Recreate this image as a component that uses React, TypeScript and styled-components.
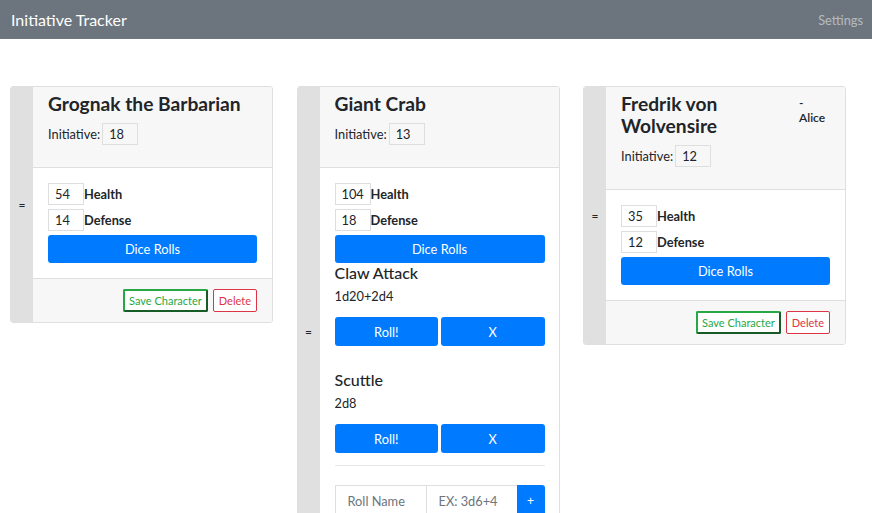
import React from 'react';
import styled, { createGlobalStyle } from 'styled-components';

const GlobalStyle = createGlobalStyle`
  html, body {
    margin: 0;
    padding: 0;
    overflow: hidden;
    background: #fff;
    font-family: Lato, "Liberation Sans", sans-serif;
    color: #212529;
  }
  * { box-sizing: border-box; }
`;

const Navbar = styled.nav`
  display: flex;
  align-items: center;
  justify-content: space-between;
  height: 39px;
  padding: 0 9px 0 11px;
  background: #6c757d;
`;

const Brand = styled.span`
  color: #fff;
  font-size: 16px;
`;

const NavLink = styled.span`
  color: rgba(255, 255, 255, 0.5);
  font-size: 12.8px;
`;

const Board = styled.main`
  display: flex;
  align-items: flex-start;
  gap: 23.5px;
  padding: 47px 10px;
`;

const Card = styled.div`
  display: flex;
  width: 263px;
  border: 1px solid #dfdfdf;
  border-radius: 3px;
  overflow: hidden;
`;

const Handle = styled.div`
  display: flex;
  align-items: center;
  justify-content: center;
  width: 22px;
  flex-shrink: 0;
  background: #e0e0e0;
  font-size: 12px;
`;

const Content = styled.div`
  flex: 1;
  display: flex;
  flex-direction: column;
`;

const Header = styled.div`
  padding: 6px 15px 22px;
  background: #f7f7f7;
  border-bottom: 1px solid #dfdfdf;
`;

const TitleRow = styled.div`
  display: flex;
  align-items: flex-start;
`;

const Title = styled.h4`
  flex: 1;
  margin: 0 0 8px;
  font-size: 19.2px;
  line-height: 22px;
  font-weight: 700;
`;

const Owner = styled.div`
  width: 31px;
  flex-shrink: 0;
  margin-top: 2px;
  font-size: 12px;
  line-height: 15px;
  font-weight: 600;
`;

const FieldRow = styled.div<{ $gap?: number }>`
  display: flex;
  align-items: center;
  gap: ${(p) => p.$gap ?? 0}px;
  font-size: 12.8px;
`;

const SmallInput = styled.input<{ $muted?: boolean }>`
  width: 36px;
  height: 22px;
  padding: 0 6px;
  border: 1px solid #dedede;
  background: ${(p) => (p.$muted ? '#f7f7f7' : '#fff')};
  font-family: inherit;
  font-size: 12.8px;
  color: #212529;
`;

const StatLabel = styled.span`
  font-weight: 700;
`;

const Body = styled.div`
  display: flex;
  flex-direction: column;
  gap: 4px;
  padding: 15px;
`;

const BlueButton = styled.button<{ $h?: number }>`
  height: ${(p) => p.$h ?? 28}px;
  width: 100%;
  border: none;
  border-radius: 3px;
  background: #007bff;
  color: #fff;
  font-family: inherit;
  font-size: 12.8px;
`;

const RollList = styled.div`
  display: flex;
  flex-direction: column;
  gap: 24px;
  margin-top: -4px;
`;

const RollItem = styled.div`
  display: flex;
  flex-direction: column;
`;

const RollName = styled.h5`
  margin: 0 0 5px;
  font-size: 16px;
  line-height: 20px;
  font-weight: 500;
`;

const RollDice = styled.div`
  margin-bottom: 13px;
  font-size: 12.8px;
  line-height: 16px;
`;

const ButtonPair = styled.div`
  display: grid;
  grid-template-columns: 1fr 1fr;
  gap: 3px;
`;

const Divider = styled.hr`
  margin: 8px 0 15px;
  border: none;
  border-top: 1px solid #e8e8e8;
`;

const InputGroup = styled.div`
  display: flex;
  height: 31px;
`;

const GroupInput = styled.input`
  width: 92px;
  height: 100%;
  padding: 0 12px;
  border: 1px solid #dedede;
  margin-right: -1px;
  font-family: inherit;
  font-size: 12.8px;
  &::placeholder { color: #6c757d; }
`;

const AddButton = styled.button`
  width: 28px;
  height: 100%;
  border: none;
  border-radius: 0 3px 3px 0;
  background: #007bff;
  color: #fff;
  font-size: 12px;
`;

const Footer = styled.div`
  display: flex;
  justify-content: flex-end;
  gap: 5px;
  padding: 10px 15px;
  background: #f7f7f7;
  border-top: 1px solid #dfdfdf;
`;

const OutlineButton = styled.button<{ $tone: 'success' | 'danger' }>`
  height: 23px;
  padding: 0 ${(p) => (p.$tone === 'success' ? 4 : 5)}px;
  border-radius: 2px;
  background: #fff;
  font-family: inherit;
  font-size: 11px;
  color: ${(p) => (p.$tone === 'success' ? '#28a745' : '#dc3545')};
  border: ${(p) => (p.$tone === 'success' ? '2px' : '1px')} solid;
  border-color: ${(p) =>
    p.$tone === 'success' ? '#28a745 #175c27 #175c27 #28a745' : '#dc3545'};
`;

interface Roll {
  name: string;
  dice: string;
}

interface Character {
  name: string;
  owner?: string;
  initiative: number;
  health: number;
  defense: number;
  rolls?: Roll[];
}

const characters: Character[] = [
  { name: 'Grognak the Barbarian', initiative: 18, health: 54, defense: 14 },
  {
    name: 'Giant Crab',
    initiative: 13,
    health: 104,
    defense: 18,
    rolls: [
      { name: 'Claw Attack', dice: '1d20+2d4' },
      { name: 'Scuttle', dice: '2d8' },
    ],
  },
  { name: 'Fredrik von Wolvensire', owner: '- Alice', initiative: 12, health: 35, defense: 12 },
];

const CharacterCard = ({ c }: { c: Character }) => (
  <Card>
    <Handle>=</Handle>
    <Content>
      <Header>
        <TitleRow>
          <Title>{c.name}</Title>
          {c.owner && <Owner>{c.owner}</Owner>}
        </TitleRow>
        <FieldRow $gap={2}>
          <span>Initiative:</span>
          <SmallInput $muted defaultValue={c.initiative} />
        </FieldRow>
      </Header>
      <Body>
        <FieldRow>
          <SmallInput defaultValue={c.health} />
          <StatLabel>Health</StatLabel>
        </FieldRow>
        <FieldRow>
          <SmallInput defaultValue={c.defense} />
          <StatLabel>Defense</StatLabel>
        </FieldRow>
        <BlueButton>Dice Rolls</BlueButton>
        {c.rolls && (
          <>
            <RollList>
              {c.rolls.map((r) => (
                <RollItem key={r.name}>
                  <RollName>{r.name}</RollName>
                  <RollDice>{r.dice}</RollDice>
                  <ButtonPair>
                    <BlueButton $h={29}>Roll!</BlueButton>
                    <BlueButton $h={29}>X</BlueButton>
                  </ButtonPair>
                </RollItem>
              ))}
            </RollList>
            <Divider />
            <InputGroup>
              <GroupInput placeholder="Roll Name" />
              <GroupInput placeholder="EX: 3d6+4" />
              <AddButton>+</AddButton>
            </InputGroup>
          </>
        )}
      </Body>
      <Footer>
        <OutlineButton $tone="success">Save Character</OutlineButton>
        <OutlineButton $tone="danger">Delete</OutlineButton>
      </Footer>
    </Content>
  </Card>
);

export default function App() {
  return (
    <>
      <GlobalStyle />
      <Navbar>
        <Brand>Initiative Tracker</Brand>
        <NavLink>Settings</NavLink>
      </Navbar>
      <Board>
        {characters.map((c) => (
          <CharacterCard key={c.name} c={c} />
        ))}
      </Board>
    </>
  );
}
